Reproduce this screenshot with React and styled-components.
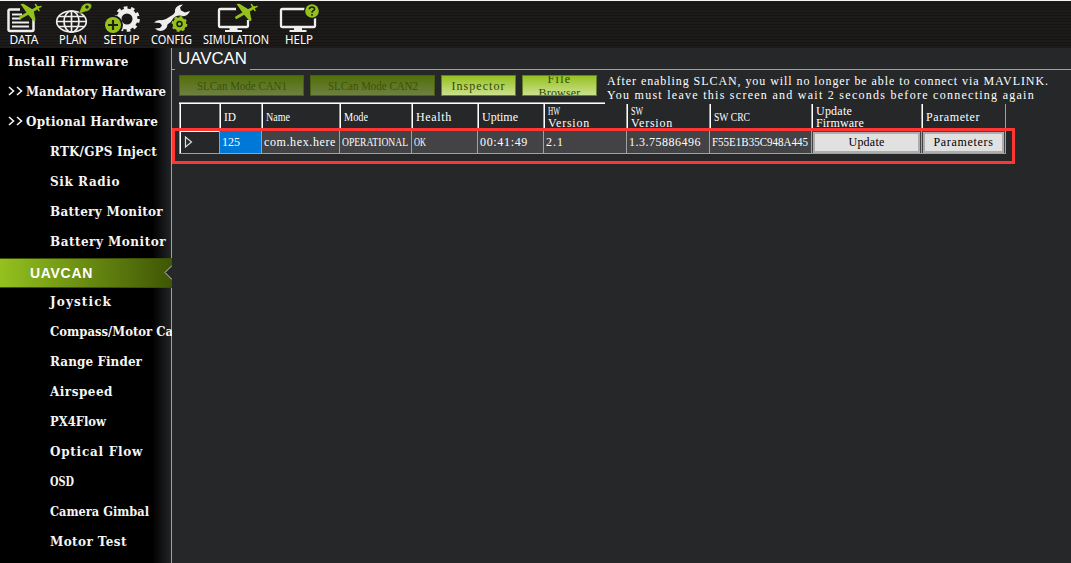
import React, { useLayoutEffect, useRef } from "react";
import styled, { createGlobalStyle, css } from "styled-components";

const Global = createGlobalStyle`
  * { box-sizing: border-box; }
  body { margin: 0; background: #262729; overflow: hidden; }
`;

const Fitted = styled.span`
  display: inline-block;
  white-space: pre;
  transform-origin: 0 50%;
`;

function Fit({ width, children }) {
  const ref = useRef(null);
  useLayoutEffect(() => {
    const el = ref.current;
    el.style.letterSpacing = "0px";
    el.style.width = "auto";
    el.style.transform = "none";
    const natural = el.getBoundingClientRect().width;
    if (natural > width) el.style.transform = `scaleX(${width / natural})`;
    else el.style.letterSpacing = `${(width - natural) / children.length}px`;
    el.style.width = `${width}px`;
  }, [width, children]);
  return <Fitted ref={ref}>{children}</Fitted>;
}

const Cells = ({ children }) => <Fit width={children.length * 6}>{children}</Fit>;

const Window = styled.div`
  width: 1071px;
  height: 563px;
  display: flex;
  flex-direction: column;
  overflow: hidden;
  background: #262729;
  font-family: "Liberation Serif", serif;
`;

const Toolbar = styled.header`
  flex: none;
  height: 48px;
  display: flex;
  border-top: 1px solid #f4f4f4;
  background: repeating-linear-gradient(#1b1a18 0 2px, #171513 2px 3px, #1d1b19 3px 5px, #161513 5px 6px);
`;

const Tool = styled.button`
  width: ${(p) => p.$w}px;
  padding: 0;
  border: 0;
  background: none;
  color: #fff;
  display: flex;
  flex-direction: column;
  align-items: center;
  font: 12px/14px "Noto Sans", sans-serif;
  svg { display: block; flex: none; }
`;

const Body = styled.div`
  flex: 1;
  min-height: 0;
  display: flex;
`;

const Sidebar = styled.nav`
  flex: none;
  width: 172px;
  border-right: 1px solid #a0a1a4;
  background: linear-gradient(90deg, #000 152px, #232426 171px);
`;

const Menu = styled.ul`
  list-style: none;
  margin: -2px 0 0;
  padding: 0;
`;

const Item = styled.li`
  height: 30px;
  width: 172px;
  padding-left: ${(p) => (p.$sub ? 50 : 8)}px;
  overflow: hidden;
  white-space: nowrap;
  color: #f5f5f5;
  font: bold 12px/32px "DejaVu Serif", serif;
  ${(p) =>
    p.$active &&
    css`
      display: flex;
      align-items: center;
      justify-content: space-between;
      margin: 2px 0 -2px;
      padding-left: 30px;
      border: solid #3c5004;
      border-width: 1px 0;
      background: linear-gradient(90deg, #94c11f, #3f5605);
      color: #fff;
      font: bold 14px/28px "Liberation Sans", sans-serif;
    `}
`;

const Chevrons = styled.svg`
  width: 16px;
  height: 10px;
  margin-right: 2px;
`;

const Panel = styled.main`
  flex: 1;
  min-width: 0;
`;

const Legend = styled.h1`
  height: 22px;
  margin: 0;
  display: flex;
  color: #fff;
  font: 17px/22px "Liberation Sans", sans-serif;
  &::before, &::after {
    content: "";
    border-bottom: 1px solid #a0a1a4;
  }
  &::before { width: 3px; margin-right: 3px; }
  &::after { flex: 1; margin-left: 3px; }
`;

const Actions = styled.div`
  height: 32px;
  padding: 5px 0 0 7px;
  display: flex;
  gap: 6px;
`;

const GreenButton = styled.button`
  width: ${(p) => p.$w}px;
  height: 21px;
  padding: 0;
  overflow: hidden;
  display: flex;
  flex-direction: column;
  align-items: center;
  justify-content: center;
  border: 1px solid ${(p) => (p.disabled ? "#48600f" : "#64812a")};
  background: ${(p) =>
    p.disabled ? "linear-gradient(#526f09, #6d8040)" : "linear-gradient(#94c11f, #cce08e)"};
  color: ${(p) => (p.disabled ? "#3c5206" : "#334804")};
  font: 12px/14px "Liberation Serif", serif;
  > span { flex: none; }
`;

const Notice = styled.p`
  margin: -1px 0 0 4px;
  display: flex;
  flex-direction: column;
  align-items: flex-start;
  color: #fff;
  font-size: 12px;
  line-height: 14px;
`;

const Grid = styled.div`
  position: relative;
  width: 827px;
  margin-left: 7px;
  color: #fff;
  font-size: 12px;
  line-height: 12px;
`;

const GridEdge = styled.div`
  width: 426px;
  height: 2px;
  border-top: 1px solid #a0a0a0;
  background: #fff;
`;

const Row = styled.div`
  display: flex;
  height: ${(p) => p.$h}px;
  border-right: 1px solid #a0a0a0;
`;

const Head = styled.div`
  flex: none;
  width: ${(p) => p.$w}px;
  height: 25px;
  padding: 1px 0 0 4px;
  display: flex;
  flex-direction: column;
  align-items: flex-start;
  justify-content: center;
  border-left: 1px solid #a0a0a0;
  box-shadow: inset 1px 0 #fff;
  > span { flex: none; }
`;

const Cell = styled.div`
  flex: none;
  width: ${(p) => p.$w}px;
  height: 23px;
  padding: 0 0 0 2px;
  display: flex;
  align-items: center;
  border: solid #a0a0a0;
  border-width: 0 0 1px 1px;
  background: ${(p) => (p.$selected ? "#0078d7" : "#434345")};
`;

const RowHead = styled(Cell)`
  padding: 0 0 0 4px;
  background: #262729;
  box-shadow: inset 1px 1px #fff;
`;

const ActionCell = styled(Cell)`
  padding: 0 1px 0 1px;
`;

const CellButton = styled.button`
  flex: 1;
  height: 21px;
  padding: 0;
  border: 2px solid #adadad;
  background: #e1e1e1;
  color: #000;
  font: 12px/17px "Liberation Serif", serif;
`;

const Highlight = styled.div`
  position: absolute;
  left: -7px;
  top: 26px;
  width: 843px;
  height: 36px;
  border: 3px solid #ff3633;
  pointer-events: none;
`;

const GREEN = "#95c11f";
const WHITE = "#eeeeee";

const Plane = ({ x, y }) => (
  <g transform={`translate(${x} ${y})`} stroke={GREEN} strokeLinecap="round">
    <path d="M0.500 14.500 L18 4.500" strokeWidth="2.800" />
    <path d="M0.500 1 L3.500 0.800 L13.500 7 L15.500 17 L14 18.500 L7.500 11 Z" fill={GREEN} stroke="none" />
    <path d="M15.500 1.500 L19 7.500 M18 4.500 L21 3.500" strokeWidth="1.500" />
  </g>
);

const DataIcon = () => (
  <g>
    <path d="M20 9.500 H10 Q8.500 9.500 8.500 11 V29.500 Q8.500 31 10 31 H32 Q33.500 31 33.500 29.500 V19" fill="none" stroke={WHITE} strokeWidth="2.500" />
    <path d="M12 14.500 H22 M12 18.500 H21 M12 22.500 H29 M12 26.500 H29" stroke={WHITE} strokeWidth="2.200" />
    <Plane x={20} y={3} />
  </g>
);

const PlanIcon = () => (
  <g fill="none" stroke={WHITE} strokeWidth="1.700">
    <ellipse cx="71.500" cy="21.500" rx="14.800" ry="10.500" />
    <ellipse cx="71.500" cy="21.500" rx="7.500" ry="10.500" />
    <path d="M71.500 11 V32 M57 21.500 H86 M59 16.500 H84 M59 26.500 H84" />
    <path d="M78.500 14 L81.500 6.500 Q83.500 3 88 3 Q92.500 3.500 91.500 7 Q90 11.500 84.500 12 Z" fill={GREEN} stroke="#191816" strokeWidth=".6" />
    <circle cx="87" cy="7" r="1.800" fill="#222" stroke="none" />
  </g>
);

const SetupIcon = () => (
  <g>
    <circle cx="127" cy="19" r="8" fill="none" stroke={WHITE} strokeWidth="5" />
    <circle cx="127" cy="19" r="11.300" fill="none" stroke={WHITE} strokeWidth="3" strokeDasharray="3.700 3.400" />
    <circle cx="113" cy="25" r="10" fill="#191816" />
    <circle cx="113" cy="25" r="8" fill={GREEN} />
    <path d="M113 20 V30 M108 25 H118" stroke="#1f2608" strokeWidth="2.200" />
  </g>
);

const ConfigIcon = () => (
  <g>
    <path
      fill={WHITE}
      d="M183 4.500 Q176 5 175 10 Q175.500 13 172.500 15 L166 19 Q163 20.500 160 20 Q156 20 154 22.500 L160 23 L162 25.500 L160 28 L155 28.500 Q158 32 163 30.500 Q167 29 167.500 24.500 L175 18.500 Q178 15.500 182 16.500 Q188 16 190 11 L185 12.500 L181 10.500 L180 7.500 Z"
    />
    <circle cx="179.500" cy="24" r="8.500" fill="#191816" />
    <circle cx="179.500" cy="24" r="5" fill="none" stroke={GREEN} strokeWidth="3.600" />
    <circle cx="179.500" cy="24" r="7" fill="none" stroke={GREEN} strokeWidth="1.800" strokeDasharray="2.750 2.750" />
    <circle cx="179.500" cy="24" r="1.700" fill={GREEN} />
  </g>
);

const Monitor = ({ x, w }) => (
  <g>
    <rect x={x} y="9" width={w} height="18" rx="1.500" fill="none" stroke={WHITE} strokeWidth="2.300" />
    <path d={`M${x + w / 2 - 4} 28 h8 v2 h4.500 v2 h-17 v-2 h4.500 Z`} fill={WHITE} />
  </g>
);

const SimulationIcon = () => (
  <g>
    <Monitor x={219} w={29} />
    <path d="M236 3 H256 V20 H245 L236 10 Z" fill="#191816" />
    <Plane x={236} y={3} />
  </g>
);

const HelpIcon = () => (
  <g>
    <Monitor x={281} w={34} />
    <circle cx="312" cy="11" r="8" fill="#191816" />
    <circle cx="312" cy="11" r="6.800" fill={GREEN} />
    <path d="M309.300 9.300 Q309.500 7 312 7 Q314.800 7 314.500 9.300 Q314.200 10.500 312.800 11 Q312 11.500 312 12.800 M312 14 V15.700" fill="none" stroke="#1f2608" strokeWidth="1.600" />
  </g>
);

const tools = [
  { label: "DATA", x: 0, w: 48, text: 29, Icon: DataIcon },
  { label: "PLAN", x: 48, w: 49, text: 28, Icon: PlanIcon },
  { label: "SETUP", x: 97, w: 49, text: 36, Icon: SetupIcon },
  { label: "CONFIG", x: 146, w: 50, text: 41, Icon: ConfigIcon },
  { label: "SIMULATION", x: 196, w: 80, text: 66, Icon: SimulationIcon },
  { label: "HELP", x: 276, w: 45, text: 28, Icon: HelpIcon },
];

const menu = [
  { label: "Install Firmware", w: 121 },
  { label: "Mandatory Hardware", w: 140, group: true },
  { label: "Optional Hardware", w: 132, group: true },
  { label: "RTK/GPS Inject", w: 107, sub: true },
  { label: "Sik Radio", w: 70, sub: true },
  { label: "Battery Monitor", w: 113, sub: true },
  { label: "Battery Monitor", w: 116, sub: true },
  { label: "UAVCAN", w: 63, active: true },
  { label: "Joystick", w: 62, sub: true },
  { label: "Compass/Motor Ca", w: 123, sub: true },
  { label: "Range Finder", w: 92, sub: true },
  { label: "Airspeed", w: 63, sub: true },
  { label: "PX4Flow", w: 56, sub: true },
  { label: "Optical Flow", w: 93, sub: true },
  { label: "OSD", w: 24, sub: true },
  { label: "Camera Gimbal", w: 99, sub: true },
  { label: "Motor Test", w: 77, sub: true },
];

const columns = [
  { w: 42, head: ["ID"], value: "125", selected: true },
  { w: 78, head: ["Name"], value: "com.hex.here" },
  { w: 72, head: ["Mode"], value: "OPERATIONAL" },
  { w: 66, head: ["Health"], value: "OK" },
  { w: 66, head: ["Uptime"], value: "00:41:49" },
  { w: 83, head: ["HW", "Version"], value: "2.1" },
  { w: 83, head: ["SW", "Version"], value: "1.3.75886496" },
  { w: 102, head: ["SW CRC"], value: "F55E1B35C948A445" },
  { w: 110, head: ["Update", "Firmware"], button: "Update" },
  { w: 84, head: ["Parameter"], button: "Parameters" },
];

export default function App() {
  return (
    <Window>
      <Global />
      <Toolbar>
        {tools.map(({ label, x, w, text, Icon }) => (
          <Tool key={label} $w={w}>
            <svg width={w} height="32" viewBox={`${x} 1 ${w} 32`}>
              <Icon />
            </svg>
            <Fit width={text}>{label}</Fit>
          </Tool>
        ))}
      </Toolbar>
      <Body>
        <Sidebar>
          <Menu>
            {menu.map((m, i) => (
              <Item key={i} $sub={m.sub} $active={m.active}>
                {m.group && (
                  <Chevrons viewBox="0 0 16 10">
                    <path d="M1 1 L5.500 5 L1 9 M9 1 L13.500 5 L9 9" fill="none" stroke="#f5f5f5" strokeWidth="1.600" />
                  </Chevrons>
                )}
                <Fit width={m.w}>{m.label}</Fit>
                {m.active && (
                  <svg width="8" height="16" viewBox="0 0 8 16">
                    <path d="M8 .5 L1 7.500 L8 14.500" fill="#262729" stroke="#c4c8bc" />
                  </svg>
                )}
              </Item>
            ))}
          </Menu>
        </Sidebar>
        <Panel>
          <Legend><Fit width={69}>UAVCAN</Fit></Legend>
          <Actions>
            <GreenButton $w={125} disabled><Cells>SLCan Mode CAN1</Cells></GreenButton>
            <GreenButton $w={125} disabled><Cells>SLCan Mode CAN2</Cells></GreenButton>
            <GreenButton $w={75}><Cells>Inspector</Cells></GreenButton>
            <GreenButton $w={75}><Cells>File</Cells><Cells>Browser</Cells></GreenButton>
            <Notice>
              <Fit width={442}>After enabling SLCAN, you will no longer be able to connect via MAVLINK.</Fit>
              <Fit width={428}>You must leave this screen and wait 2 seconds before connecting again</Fit>
            </Notice>
          </Actions>
          <Grid>
            <GridEdge />
            <Row $h={27}>
              <Head $w={40} />
              {columns.map((c, i) => (
                <Head key={i} $w={c.w}>
                  {c.head.map((h) => <Cells key={h}>{h}</Cells>)}
                </Head>
              ))}
            </Row>
            <Row $h={23}>
              <RowHead $w={40}>
                <svg width="9" height="12" viewBox="0 0 9 12">
                  <path d="M1.500 1 V11 L7.500 6 Z" fill="none" stroke="#ddd" strokeWidth="1.200" />
                </svg>
              </RowHead>
              {columns.map((c, i) =>
                c.button ? (
                  <ActionCell key={i} $w={c.w}>
                    <CellButton><Cells>{c.button}</Cells></CellButton>
                  </ActionCell>
                ) : (
                  <Cell key={i} $w={c.w} $selected={c.selected}><Cells>{c.value}</Cells></Cell>
                )
              )}
            </Row>
            <Highlight />
          </Grid>
        </Panel>
      </Body>
    </Window>
  );
}
